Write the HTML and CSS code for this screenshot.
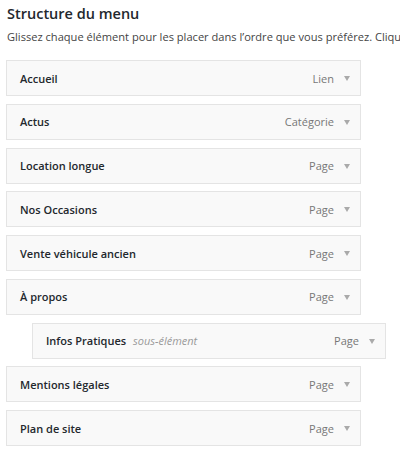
FILE: index.html
```html
<!DOCTYPE html>
<html lang="fr">
<head>
  <meta charset="UTF-8" />
  <title>Structure du menu</title>
  <link rel="stylesheet" href="styles.css">
</head>
<body>

<h3 class="menu-title">Structure du menu</h3>
<p class="menu-help">Glissez chaque élément pour les placer dans l’ordre que vous préférez. Cliquez sur la flèche à droite de l’élément pour afficher d’autres options.</p>

<ul class="menu-items">
  <li class="menu-item"><span class="item-title">Accueil</span><span class="item-type">Lien</span><span class="item-arrow"></span></li>
  <li class="menu-item"><span class="item-title">Actus</span><span class="item-type">Catégorie</span><span class="item-arrow"></span></li>
  <li class="menu-item"><span class="item-title">Location longue</span><span class="item-type">Page</span><span class="item-arrow"></span></li>
  <li class="menu-item"><span class="item-title">Nos Occasions</span><span class="item-type">Page</span><span class="item-arrow"></span></li>
  <li class="menu-item"><span class="item-title">Vente véhicule ancien</span><span class="item-type">Page</span><span class="item-arrow"></span></li>
  <li class="menu-item"><span class="item-title">À propos</span><span class="item-type">Page</span><span class="item-arrow"></span></li>
  <li class="menu-item sub"><span class="item-title">Infos Pratiques <em>sous-élément</em></span><span class="item-type">Page</span><span class="item-arrow"></span></li>
  <li class="menu-item"><span class="item-title">Mentions légales</span><span class="item-type">Page</span><span class="item-arrow"></span></li>
  <li class="menu-item"><span class="item-title">Plan de site</span><span class="item-type">Page</span><span class="item-arrow"></span></li>
</ul>

</body>
</html>
```

FILE: styles.css
```css
body {
  font-family: 'Open Sans', 'Noto Sans', sans-serif;
  background: #fff;
  color: #23282d;
  margin: 0;
  padding: 0 7px;
  overflow: hidden;
}
.menu-title {
  font-size: 14.5px;
  font-weight: 600;
  margin: 4px 0 0;
  line-height: 20px;
}
.menu-help {
  font-size: 11.1px;
  color: #444;
  margin: 5px -7px 0 0;
  line-height: 16px;
  white-space: nowrap;
  overflow: hidden;
}
.menu-items {
  list-style: none;
  margin: 15px 0 0 -1px;
  padding: 0;
}
.menu-item {
  width: 355px;
  height: 36px;
  box-sizing: border-box;
  border: 1px solid #e4e4e4;
  background: #f9f9f9;
  margin-bottom: 7.75px;
  display: flex;
  align-items: center;
  padding: 0 10px 0 13px;
  font-size: 11px;
}
.menu-item.sub {
  margin-left: 26px;
  width: 354px;
}
.item-title {
  font-weight: 600;
  flex: 1;
  color: #23282d;
}
.item-title em {
  font-weight: 400;
  color: #999;
  margin-left: 4px;
}
.item-type {
  color: #777;
  margin-right: 10px;
}
.item-arrow {
  width: 0;
  height: 0;
  border-left: 3.5px solid transparent;
  border-right: 3.5px solid transparent;
  border-top: 5px solid #aaa;
  margin-top: 1px;
}
```
